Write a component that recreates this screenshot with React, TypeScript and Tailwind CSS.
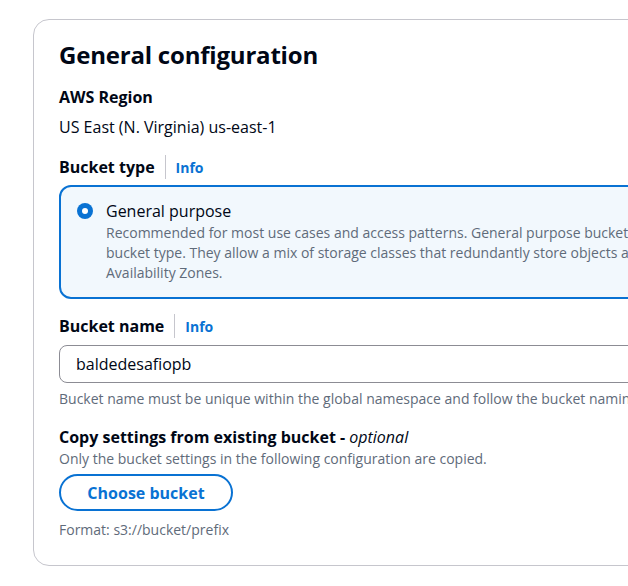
const font = { fontFamily: '"Open Sans", "Noto Sans", sans-serif' };

const InfoLink = () => (
  <span className="flex items-center">
    <span className="mx-[10px] h-[24px] w-px bg-[#c6c6cd]" />
    <span className="text-[14px] font-bold text-[#0972d3]">Info</span>
  </span>
);

const App = () => {
  return (
    <div className="h-[586px] w-[628px] overflow-hidden bg-white pl-[33px] pt-[19px]" style={font}>
      <div className="w-[800px] rounded-[16px] border border-[#c6c6cd] bg-white pb-[25px] pl-[25px] pr-[20px] pt-[18px] text-[#000716]">
        <h2 className="text-[24px] font-bold leading-[34px] tracking-[-0.2px]">General configuration</h2>

        <div className="mt-[13px] text-[16px] font-bold leading-[24px]">AWS Region</div>
        <div className="mt-[6px] text-[16px] leading-[24px]">US East (N. Virginia) us-east-1</div>

        <div className="mt-[16px] flex items-center">
          <span className="text-[16px] font-bold leading-[24px]">Bucket type</span>
          <InfoLink />
        </div>

        <div className="mt-[6px] flex w-[720px] rounded-[12px] border-2 border-[#0972d3] bg-[#f2f8fd] pb-[14px] pl-[16px] pt-[12px]">
          <span className="mt-[4px] flex h-[16px] w-[16px] shrink-0 items-center justify-center rounded-full bg-[#0972d3]">
            <span className="h-[6px] w-[6px] rounded-full bg-white" />
          </span>
          <div className="ml-[13px]">
            <div className="text-[16px] leading-[24px]">General purpose</div>
            <p className="whitespace-nowrap text-[14px] leading-[20px] text-[#5f6b7a]">
              Recommended for most use cases and access patterns. General purpose buckets are the original S3
              <br />
              bucket type. They allow a mix of storage classes that redundantly store objects across multiple
              <br />
              Availability Zones.
            </p>
          </div>
        </div>

        <div className="mt-[15px] flex items-center">
          <span className="text-[16px] font-bold leading-[24px]">Bucket name</span>
          <InfoLink />
        </div>

        <div className="mt-[7px] flex h-[38px] w-[700px] items-center rounded-[8px] border border-[#8c8c94] px-[16px] text-[16px]">
          baldedesafiopb
        </div>
        <p className="mt-[6px] whitespace-nowrap text-[14px] leading-[20px] text-[#5f6b7a]">
          Bucket name must be unique within the global namespace and follow the bucket naming rules.
        </p>

        <div className="mt-[17px] text-[16px] font-bold leading-[22px]">
          Copy settings from existing bucket - <i className="font-normal">optional</i>
        </div>
        <p className="mt-[1px] text-[14px] leading-[20px] text-[#5f6b7a]">
          Only the bucket settings in the following configuration are copied.
        </p>

        <button className="mt-[5px] h-[37px] w-[174px] rounded-full border-2 border-[#0972d3] text-[16px] font-bold text-[#0972d3]">
          Choose bucket
        </button>
        <p className="mt-[9px] text-[14px] leading-[20px] text-[#5f6b7a]">Format: s3://bucket/prefix</p>
      </div>
    </div>
  );
};

export default App;
